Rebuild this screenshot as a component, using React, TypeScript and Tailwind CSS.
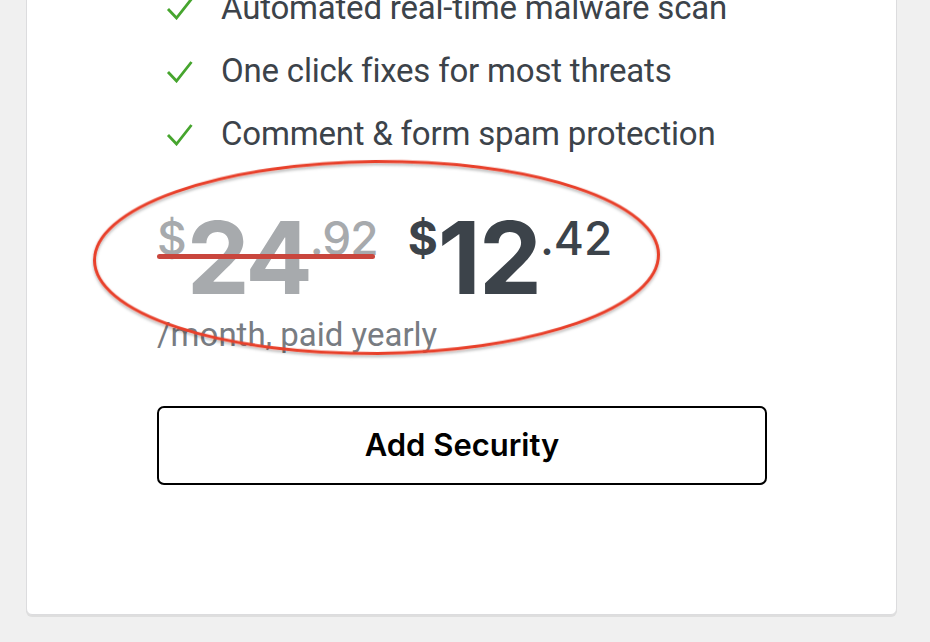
import React from "react";

const Check = () => (
  <svg width="28" height="24" viewBox="0 0 28 24" className="shrink-0">
    <path d="M2 13 L10.5 22 L25.5 3" fill="none" stroke="#46a52e" strokeWidth="2.8" strokeLinecap="butt" strokeLinejoin="miter" />
  </svg>
);

const items = [
  "Automated real-time malware scan",
  "One click fixes for most threats",
  "Comment & form spam protection",
];

export default function App() {
  return (
    <div
      className="w-[930px] h-[642px] overflow-hidden bg-[#f0f0f0] pl-[26px] pr-[33px]"
      style={{ fontFamily: "Inter, 'Noto Sans', sans-serif" }}
    >
      <div className="relative -mt-[25px] h-[640px] bg-white border border-[#dcdcde] rounded-b-[6px] shadow-[0_2px_0_#dedede] pl-[130px]">
        <ul className="flex flex-col" style={{ fontFamily: "Roboto, 'Noto Sans', sans-serif" }}>
          {items.map((t) => (
            <li key={t} className="flex items-center h-[63px] text-[33px] leading-[63px] text-[#3c434a] tracking-[-0.2px]">
              <span className="w-[64px] pl-[9px] flex items-center">
                <Check />
              </span>
              <span>{t}</span>
            </li>
          ))}
        </ul>

        <div className="mt-[43px] flex items-start">
          <div className="relative flex items-start text-[#a7aaad]">
            <span className="mt-[7px] text-[46px] leading-none font-medium">$</span>
            <span className="text-[100px] leading-none font-bold tracking-[-3px]">24</span>
            <span className="mt-[7px] text-[46px] leading-none font-medium tracking-[-1px]">.92</span>
            <div className="absolute left-0 right-[3px] top-[46px] h-[5px] rounded-full bg-[#c9463d]" />
          </div>
          <div className="ml-[30px] flex items-start text-[#3c434a]">
            <span className="mt-[7px] text-[46px] leading-none font-bold">$</span>
            <span className="text-[100px] leading-none font-bold tracking-[-2px]">12</span>
            <span className="mt-[7px] text-[46px] leading-none font-medium">.42</span>
          </div>
        </div>

        <div
          className="mt-[7px] text-[33px] leading-[40px] text-[#787c82]"
          style={{ fontFamily: "Roboto, 'Noto Sans', sans-serif" }}
        >
          /month, paid yearly
        </div>

        <button className="mt-[51px] w-[610px] h-[79px] border-2 border-black rounded-[7px] bg-white text-[31px] font-semibold text-black">
          Add Security
        </button>
      </div>

      <svg className="absolute left-0 top-0 pointer-events-none" width="930" height="642">
        <defs>
          <filter id="sh" x="-10%" y="-10%" width="120%" height="130%">
            <feDropShadow dx="0" dy="2" stdDeviation="1.5" floodColor="#000" floodOpacity="0.3" />
          </filter>
        </defs>
        <ellipse cx="376.5" cy="257.5" rx="282" ry="96" fill="none" stroke="#e8402b" strokeWidth="3" filter="url(#sh)" transform="rotate(-0.6 376.5 257.5)" />
      </svg>
    </div>
  );
}
